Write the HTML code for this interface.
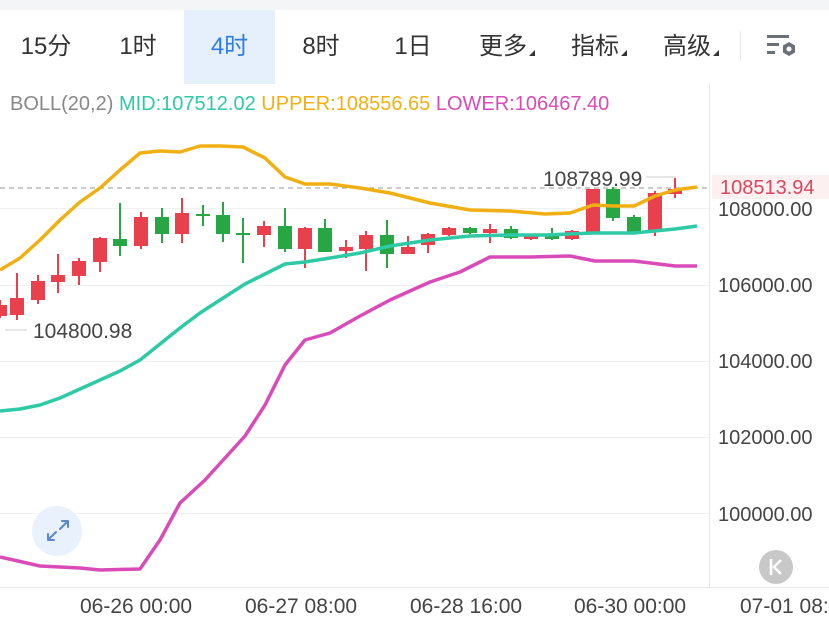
<!DOCTYPE html>
<html><head><meta charset="utf-8"><style>
*{margin:0;padding:0;box-sizing:border-box}
body{width:829px;height:622px;background:#fff;position:relative;overflow:hidden;font-family:"Liberation Sans","Noto Sans CJK SC",sans-serif;color:#333}
.top{position:absolute;left:0;top:0;width:829px;height:10px;background:#f3f5f7}
.tab{position:absolute;top:10px;height:74px;line-height:74px;font-size:24px;color:#333;text-align:center}
.sel{background:#e6f0fc;color:#2f7de1}
.tri{display:inline-block;width:0;height:0;border-left:6px solid transparent;border-bottom:6px solid #333;margin-left:2px;vertical-align:-2px}
</style></head><body>
<div class="top"></div>
<div class="tab" style="left:0;width:92px">15分</div>
<div class="tab" style="left:92px;width:92px">1时</div>
<div class="tab sel" style="left:184px;width:91px">4时</div>
<div class="tab" style="left:275px;width:92px">8时</div>
<div class="tab" style="left:367px;width:92px">1日</div>
<div class="tab" style="left:470px;width:74px">更多<span class="tri"></span></div>
<div class="tab" style="left:562px;width:74px">指标<span class="tri"></span></div>
<div class="tab" style="left:654px;width:74px">高级<span class="tri"></span></div>
<div style="position:absolute;left:740px;top:31px;width:1px;height:30px;background:#e8e8e8"></div>
<svg style="position:absolute;left:765px;top:33px" width="34" height="30" viewBox="0 0 34 30">
<rect x="2" y="2" width="22" height="3" fill="#6b6f78"/><rect x="2" y="10" width="12" height="3" fill="#6b6f78"/><rect x="2" y="18" width="8" height="3" fill="#6b6f78"/>
<polygon points="24,9 30,12.5 30,19.5 24,23 18,19.5 18,12.5" fill="#6b6f78"/><circle cx="24" cy="16" r="2.5" fill="#fff"/>
</svg>
<div style="position:absolute;left:10px;top:93px;font-size:20px;white-space:nowrap"><span style="color:#888">BOLL(20,2) </span><span style="color:#2ec9a5">MID:107512.02 </span><span style="color:#f0b014">UPPER:108556.65 </span><span style="color:#d94bb8">LOWER:106467.40</span></div>
<svg style="position:absolute;left:0;top:0" width="829" height="622">
<g stroke="#f0f0f0" stroke-width="1">
<line x1="0" y1="208.5" x2="709" y2="208.5"/><line x1="0" y1="285.5" x2="709" y2="285.5"/><line x1="0" y1="361.5" x2="709" y2="361.5"/><line x1="0" y1="437.5" x2="709" y2="437.5"/><line x1="0" y1="513.5" x2="709" y2="513.5"/>
</g>
<line x1="0" y1="587.5" x2="829" y2="587.5" stroke="#e8e8e8"/>
<line x1="709.5" y1="84" x2="709.5" y2="587" stroke="#e8e8e8"/>
<line x1="0" y1="188" x2="709" y2="188" stroke="#999" stroke-dasharray="5,4"/>
<g id="c"></g>
<polyline fill="none" stroke="#f0b014" stroke-width="3.5" stroke-linejoin="round" points="0,270 20,258 40,240 60,220 80,202 100,188 120,170 140,153 160,151 180,152 200,146 220,146 243,147 265,158 285,177 305,184 330,184 360,188 390,193 430,203 470,210 510,211 545,214 570,213 593,205 613,206 634,206 655,196 675,190 697,187"/>
<polyline fill="none" stroke="#2ec9a5" stroke-width="3.5" stroke-linejoin="round" points="0,411 20,409 40,405 60,398 80,389 100,380 120,371 140,360 160,344 180,328 200,313 220,300 245,284 265,274 285,264 305,262 330,258 360,253 390,246 430,240 470,236 510,235 545,235 593,233 634,233 675,229 697,226"/>
<polyline fill="none" stroke="#d94bb8" stroke-width="3.5" stroke-linejoin="round" points="0,557 40,566 80,568 100,570 140,569 160,540 180,503 205,480 225,458 245,436 265,405 285,365 305,340 330,333 360,316 390,300 430,282 460,272 490,257 530,257 570,256 595,261 634,261 675,266 697,266"/>
<line x1="5" y1="330" x2="27" y2="330" stroke="#ccc"/>
<text x="33" y="338" font-size="21" fill="#444" font-family="Liberation Sans">104800.98</text>
<line x1="646" y1="177" x2="676" y2="177" stroke="#ccc"/>
<text x="543" y="186" font-size="21" fill="#444" font-family="Liberation Sans">108789.99</text>
<rect x="712" y="175" width="117" height="24" fill="#fdf0f1"/>
<g font-size="20" fill="#444" font-family="Liberation Sans">
<text x="718" y="216">108000.00</text><text x="718" y="292">106000.00</text><text x="718" y="368">104000.00</text><text x="718" y="444">102000.00</text><text x="718" y="521">100000.00</text>
<text x="720" y="194" fill="#d9475f">108513.94</text>
</g>
<g font-size="21" fill="#444" font-family="Liberation Sans">
<text x="80" y="613">06-26 00:00</text><text x="245" y="613">06-27 08:00</text><text x="410" y="613">06-28 16:00</text><text x="574" y="613">06-30 00:00</text><text x="740" y="613">07-01 08:</text>
</g>
<circle cx="57" cy="531" r="25" fill="#e9f1fc"/>
<g stroke="#5b86d0" stroke-width="2" fill="none" stroke-linecap="round"><path d="M48,540 L56,532 M48,540 L48,534 M48,540 L54,540"/><path d="M68,521 L60,529 M68,521 L62,521 M68,521 L68,527"/></g>
<circle cx="776" cy="567" r="17" fill="#c8c8c8"/>
<path d="M771,559 V575 M781,560 L774,567 L781,574" stroke="#fff" stroke-width="2.5" fill="none"/>
</svg>
<script>
var d=[[0,'r',305,316,300,318],[17,'r',298,315,273,320],[38,'r',281,300,275,304],[58,'r',275,282,254,293],[79,'r',261,276,258,285],[100,'r',238,262,237,272],[120,'g',239,246,203,256],[141,'r',217,246,212,249],[162,'g',217,234,208,243],[182,'r',213,234,198,243],[203,'g',214,216,205,226],[223,'g',215,234,202,242],[243,'g',233,235,218,263],[264,'r',226,235,221,247],[285,'g',226,249,208,252],[305,'r',228,249,227,268],[325,'g',228,252,219,252],[346,'r',247,251,240,258],[366,'r',235,249,231,271],[387,'g',235,254,220,268],[408,'r',247,254,236,254],[428,'r',234,245,233,253],[449,'r',228,235,227,236],[470,'g',228,233,227,234],[490,'r',229,233,224,243],[511,'g',229,238,226,239],[531,'r',236,239,235,240],[552,'g',236,239,228,240],[572,'r',231,239,230,240],[593,'r',189,232,189,232],[613,'g',189,218,187,221],[634,'g',217,232,215,232],[655,'r',193,230,191,236],[675,'r',189,194,178,198]];
var s='';d.forEach(function(c){var col=c[1]=='r'?'#e8404d':'#27a644';s+='<line x1="'+c[0]+'" y1="'+c[4]+'" x2="'+c[0]+'" y2="'+c[5]+'" stroke="'+col+'" stroke-width="2"/><rect x="'+(c[0]-7)+'" y="'+c[2]+'" width="14" height="'+Math.max(2,c[3]-c[2])+'" fill="'+col+'"/>';});
document.getElementById('c').innerHTML=s;
</script>
</body></html>
